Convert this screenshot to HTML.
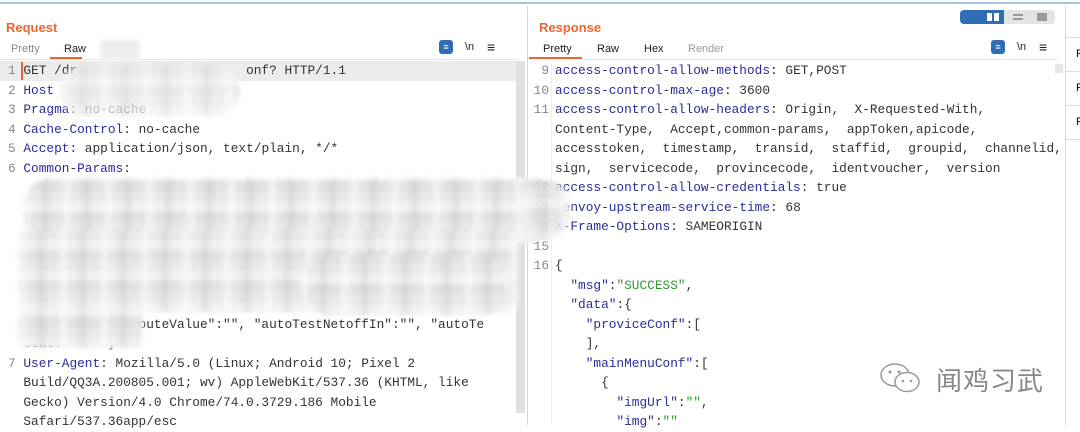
<!DOCTYPE html>
<html><head><meta charset="utf-8"><style>
*{margin:0;padding:0;box-sizing:border-box}
body{width:1080px;height:425px;overflow:hidden;background:#fff;font-family:"Liberation Sans",sans-serif;position:relative}
.abs{position:absolute}
.title{font-weight:bold;color:#f0642e;font-size:13px}
.tab{font-size:11px;color:#222}
.tab.dis{color:#999}
.code{font-family:"Liberation Mono",monospace;font-size:12.8px;line-height:19.5px;color:#333;white-space:pre}
.k{color:#2b2b9a}
.s{color:#2e9a2e}
.n{color:#888}
.mos{background-color:#e8e8e8;
background-image:repeating-linear-gradient(90deg,rgba(255,255,255,.45) 0 9px,transparent 9px 19px,rgba(0,0,0,.05) 19px 28px,transparent 28px 41px),
repeating-linear-gradient(0deg,rgba(255,255,255,.4) 0 10px,transparent 10px 21px,rgba(0,0,0,.03) 21px 31px);
filter:blur(2px);border-radius:30px}
</style></head><body>
<div class="abs" style="left:0;top:2px;width:1080px;height:2px;background:#a8c4e2"></div>
<div class="abs" style="left:527px;top:6px;width:1px;height:419px;background:#d6d6d6"></div>
<div class="abs" style="left:1065px;top:6px;width:1px;height:419px;background:#d6d6d6"></div>
<div class="abs" style="left:1066px;top:37px;width:14px;height:1px;background:#ddd"></div>
<div class="abs" style="left:1066px;top:71px;width:14px;height:1px;background:#ddd"></div>
<div class="abs" style="left:1066px;top:105px;width:14px;height:1px;background:#ddd"></div>
<div class="abs" style="left:1066px;top:139px;width:14px;height:1px;background:#ddd"></div>
<div class="abs" style="left:1076px;top:48px;font-size:11px">F</div>
<div class="abs" style="left:1076px;top:82px;font-size:11px">F</div>
<div class="abs" style="left:1076px;top:116px;font-size:11px">F</div>

<div class="abs title" style="left:6px;top:20px">Request</div>
<div class="abs tab dis" style="left:11px;top:43px;color:#888">Pretty</div>
<div class="abs tab" style="left:64px;top:43px">Raw</div>
<div class="abs" style="left:50px;top:57px;width:32px;height:2px;background:#f0642e"></div>
<div class="abs" style="left:0;top:59px;width:517px;height:1px;background:#e4e4e4"></div>
<div class="abs" style="left:439px;top:40px;width:14px;height:14px;border-radius:3px;background:#2f6eb5;color:#fff;font-size:9px;text-align:center;line-height:14px">≡</div>
<div class="abs" style="left:465px;top:41px;font-size:11px;color:#222">\n</div>
<div class="abs" style="left:487px;top:39px;font-size:14px;color:#222">≡</div>
<div class="abs" style="left:100px;top:40px;width:40px;height:20px;background:#eee;filter:blur(2px)"></div>
<div class="abs" style="left:0;top:61px;width:517px;height:20px;background:#ececec"></div>
<div class="abs" style="left:21px;top:62px;width:2px;height:18px;background:#f0642e"></div>
<div class="abs" style="left:516px;top:61px;width:9px;height:352px;background:#e0e0e0"></div>
<div class="abs code" style="left:8px;top:61px"><span class="n">1</span> GET /dr                      onf? HTTP/1.1
<span class="n">2</span> <span class="k">Host</span>
<span class="n">3</span> <span class="k">Pragma</span>: no-cache
<span class="n">4</span> <span class="k">Cache-Control</span>: no-cache
<span class="n">5</span> <span class="k">Accept</span>: application/json, text/plain, */*
<span class="n">6</span> <span class="k">Common-Params</span>:
  
  
  
  
  
  
  
             , "routeValue":"", "autoTestNetoffIn":"", "autoTe
  stat:     "}
<span class="n">7</span> <span class="k">User-Agent</span>: Mozilla/5.0 (Linux; Android 10; Pixel 2
  Build/QQ3A.200805.001; wv) AppleWebKit/537.36 (KHTML, like
  Gecko) Version/4.0 Chrome/74.0.3729.186 Mobile
  Safari/537.36app/esc</div>
<div class="abs mos" style="left:60px;top:64px;width:180px;height:52px;border-radius:25px;opacity:.75"></div>
<div class="abs mos" style="left:22px;top:178px;width:535px;height:65px"></div>
<div class="abs mos" style="left:18px;top:230px;width:500px;height:82px;border-radius:10px"></div>
<div class="abs mos" style="left:300px;top:255px;width:210px;height:60px;border-radius:40px"></div>
<div class="abs mos" style="left:18px;top:310px;width:125px;height:38px;border-radius:6px"></div>

<div class="abs title" style="left:539px;top:20px">Response</div>
<div class="abs" style="left:960px;top:10px;width:95px;height:14px;border-radius:4px;background:#e4e4e4"></div>
<div class="abs" style="left:960px;top:10px;width:44px;height:14px;border-radius:4px 0 0 4px;background:#2f6eb5"></div>
<div class="abs" style="left:987px;top:13px;width:5px;height:8px;background:#fff"></div>
<div class="abs" style="left:994px;top:13px;width:5px;height:8px;background:#fff"></div>
<div class="abs" style="left:1013px;top:14px;width:10px;height:6px;border-top:2px solid #999;border-bottom:2px solid #999"></div>
<div class="abs" style="left:1037px;top:13px;width:10px;height:8px;background:#999"></div>
<div class="abs tab" style="left:543px;top:43px">Pretty</div>
<div class="abs tab" style="left:597px;top:43px">Raw</div>
<div class="abs tab" style="left:644px;top:43px">Hex</div>
<div class="abs tab dis" style="left:688px;top:43px">Render</div>
<div class="abs" style="left:529px;top:57px;width:53px;height:2px;background:#f0642e"></div>
<div class="abs" style="left:582px;top:59px;width:475px;height:1px;background:#e4e4e4"></div>
<div class="abs" style="left:991px;top:40px;width:14px;height:14px;border-radius:3px;background:#2f6eb5;color:#fff;font-size:9px;text-align:center;line-height:14px">≡</div>
<div class="abs" style="left:1017px;top:41px;font-size:11px;color:#222">\n</div>
<div class="abs" style="left:1039px;top:39px;font-size:14px;color:#222">≡</div>
<div class="abs" style="left:1055px;top:64px;width:8px;height:9px;background:#e6e6e6"></div>
<div class="abs" style="left:551px;top:61px;width:1px;height:364px;background:#eee"></div>
<div class="abs code n" style="left:531px;top:61px;text-align:right;width:18px"> 9
10
11



12
13
14
15
16</div>
<div class="abs code" style="left:555px;top:61px"><span class="k">access-control-allow-methods</span>: GET,POST
<span class="k">access-control-max-age</span>: 3600
<span class="k">access-control-allow-headers</span>: Origin,  X-Requested-With,
Content-Type,  Accept,common-params,  appToken,apicode,
accesstoken,  timestamp,  transid,  staffid,  groupid,  channelid,
sign,  servicecode,  provincecode,  identvoucher,  version
<span class="k">access-control-allow-credentials</span>: true
 <span class="k">envoy-upstream-service-time</span>: 68
<span class="k">X-Frame-Options</span>: SAMEORIGIN

{
  <span class="k">"msg"</span>:<span class="s">"SUCCESS"</span>,
  <span class="k">"data"</span>:{
    <span class="k">"proviceConf"</span>:[
    ],
    <span class="k">"mainMenuConf"</span>:[
      {
        <span class="k">"imgUrl"</span>:<span class="s">""</span>,
        <span class="k">"img"</span>:<span class="s">""</span></div>
<div class="abs mos" style="left:520px;top:180px;width:50px;height:60px;border-radius:25px;opacity:.9"></div>

<svg class="abs" style="left:877px;top:360px" width="50" height="36" viewBox="0 0 50 36">
<ellipse cx="18" cy="15" rx="14" ry="11" fill="#fff" stroke="#999" stroke-width="1.5"/>
<ellipse cx="30" cy="22" rx="12" ry="9.5" fill="#fff" stroke="#999" stroke-width="1.5"/>
<circle cx="13" cy="12" r="1.5" fill="#999"/><circle cx="22" cy="12" r="1.5" fill="#999"/>
<circle cx="26" cy="21" r="1.3" fill="#999"/><circle cx="34" cy="21" r="1.3" fill="#999"/>
</svg>
<div class="abs" style="left:936px;top:361px;font-size:26px;color:#888;font-family:'Noto Sans CJK SC',sans-serif;letter-spacing:1px">闻鸡习武</div>
</body></html>
